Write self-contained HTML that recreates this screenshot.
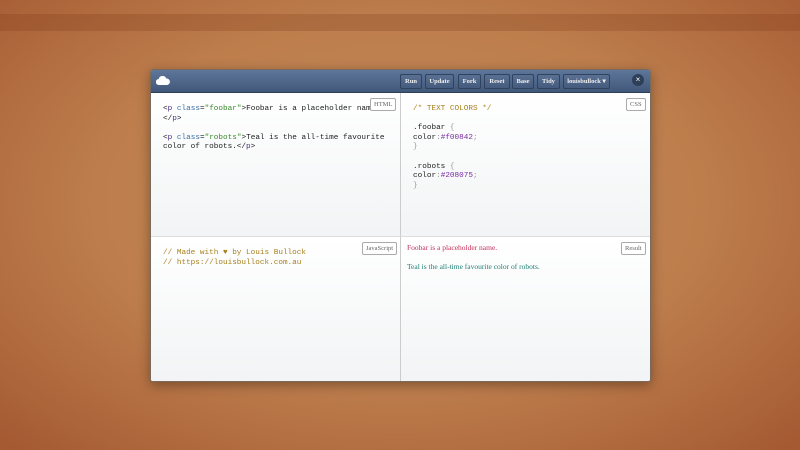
<!DOCTYPE html><html><head><style>
body{margin:0;width:800px;height:450px;overflow:hidden;background:radial-gradient(ellipse 70% 75% at 50% 45%,#c68d5c 0%,#bd7d4c 55%,#a55a32 100%);font-family:"Liberation Sans",sans-serif;position:relative}
.band{position:absolute;left:0;top:14px;width:800px;height:17px;background:rgba(120,50,20,.22)}
.win{position:absolute;left:150px;top:69px;width:499px;height:311px;background:#fbfbfb;border:1px solid #7a6a5a;border-radius:3px;box-shadow:0 3px 12px rgba(0,0,0,.35);overflow:hidden}
.hd{height:22px;background:linear-gradient(#5d7699,#42587a);border-bottom:1px solid #2e3f58;position:relative}
.btn{position:absolute;top:4px;height:13px;border:1px solid #2f4260;border-radius:2px;background:linear-gradient(#5a7193,#455b7d);color:#f0f0f0;font:bold 6.5px "Liberation Serif",serif;line-height:13px;text-align:center}
.x{position:absolute;left:481px;top:4px;width:12px;height:12px;border-radius:50%;background:#2e3f58;color:#fff;font-size:8px;line-height:12px;text-align:center}
.p{position:absolute;background:linear-gradient(#fff,#f2f4f5)}
pre{margin:0;position:absolute;font:7.7px/9.6px "Liberation Mono",monospace;color:#222}
.lb{position:absolute;border:1px solid #aaa;border-radius:2px;background:#fff;color:#666;font:6.5px "Liberation Serif",serif;padding:2px 3px}
.t{color:#4a2c8a}.a{color:#3c6ea5}.s{color:#3b8a2f}.c{color:#a7801d}.v{color:#7a2aa0}.b{color:#999}
</style></head><body><div class="band"></div>
<div class="win"><div class="hd">
<svg style="position:absolute;left:5px;top:6px" width="14" height="9" viewBox="0 0 14 9"><path d="M3 9a3 3 0 0 1-.3-6 4 4 0 0 1 7.6-.5A3 3 0 0 1 11 9z" fill="#fff"/></svg>
<div class="btn" style="left:249px;width:20px">Run</div>
<div class="btn" style="left:274px;width:27px">Update</div>
<div class="btn" style="left:307px;width:21px">Fork</div>
<div class="btn" style="left:333px;width:24px">Reset</div>
<div class="btn" style="left:361px;width:20px">Base</div>
<div class="btn" style="left:386px;width:21px">Tidy</div>
<div class="btn" style="left:412px;width:45px">louisbullock ▾</div>
<div class="x">×</div></div>
<div class="p" style="left:0;top:23px;width:249px;height:143px;border-right:1px solid #ccc;border-bottom:1px solid #ddd">
<pre style="left:12px;top:12px">&lt;<span class="t">p</span> <span class="a">class</span>=<span class="s">"foobar"</span>&gt;Foobar is a placeholder name.
&lt;/<span class="t">p</span>&gt;

&lt;<span class="t">p</span> <span class="a">class</span>=<span class="s">"robots"</span>&gt;Teal is the all-time favourite
color of robots.&lt;/<span class="t">p</span>&gt;</pre><div class="lb" style="left:219px;top:5px">HTML</div></div>
<div class="p" style="left:250px;top:23px;width:249px;height:143px;border-bottom:1px solid #ddd">
<pre style="left:12px;top:12px"><span class="c">/* TEXT COLORS */</span>

.foobar <span class="b">{</span>
color<span class="b">:</span><span class="v">#f00842</span><span class="b">;</span>
<span class="b">}</span>

.robots <span class="b">{</span>
color<span class="b">:</span><span class="v">#208075</span><span class="b">;</span>
<span class="b">}</span></pre><div class="lb" style="left:225px;top:5px">CSS</div></div>
<div class="p" style="left:0;top:167px;width:249px;height:144px;border-right:1px solid #ccc">
<pre style="left:12px;top:12px;color:#a7801d">// Made with ♥ by Louis Bullock
// https://louisbullock.com.au</pre><div class="lb" style="left:211px;top:5px">JavaScript</div></div>
<div class="p" style="left:250px;top:167px;width:249px;height:144px">
<div style="position:absolute;left:6px;top:6px;font:7.5px 'Liberation Serif',serif;color:#c0305a">Foobar is a placeholder name.</div>
<div style="position:absolute;left:6px;top:25px;font:7.5px 'Liberation Serif',serif;color:#208075">Teal is the all-time favourite color of robots.</div>
<div class="lb" style="left:220px;top:5px">Result</div></div>
</div></body></html>
